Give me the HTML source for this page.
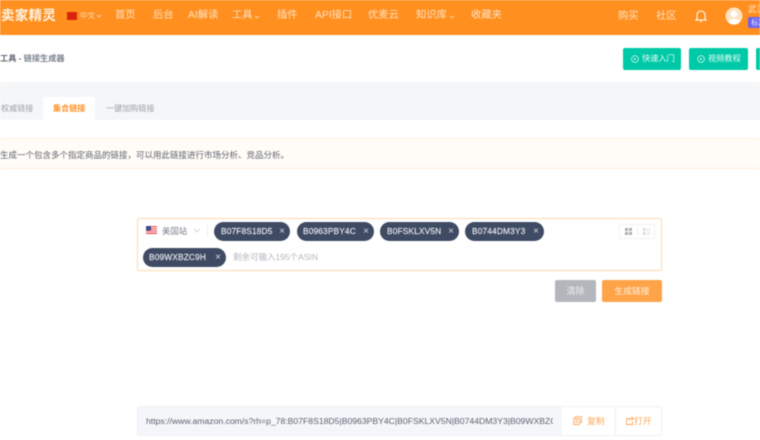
<!DOCTYPE html>
<html lang="zh">
<head>
<meta charset="utf-8">
<style>
html,body{margin:0;padding:0;background:#fff}
body{width:760px;height:440px;overflow:hidden;position:relative;font-family:"Liberation Sans","Noto Sans CJK SC",sans-serif;color:#606266}
.a{position:absolute;white-space:nowrap}
#wrap{position:absolute;left:0;top:0;width:760px;height:440px;overflow:hidden;filter:blur(.45px)}
.nav{top:0;height:35px;line-height:31px;font-size:10.3px;color:#ffe3c4}
.top{top:48px;height:22px;background:#00c9a7;border-radius:2px;color:#e6fbf6;font-size:8.2px;line-height:22px}
.tag{height:19px;border-radius:10px;background:#3f4a63;color:#e8ebf0;font-size:8.4px;line-height:19px;letter-spacing:.12px;-webkit-text-stroke:.15px #e8ebf0}
.tag i{position:absolute;right:5px;top:0;font-style:normal;font-size:10px;color:#d5d9e0;-webkit-text-stroke:0;letter-spacing:0}
.tag span{position:absolute;left:7px;top:0}
</style>
</head>
<body>
<div id="wrap">
<div class="a" style="left:0;top:0;width:760px;height:35px;background:#ff8f1f"></div>
<div class="a" style="left:1px;top:6px;font-size:13.5px;line-height:20px;font-weight:bold;color:#fff3e4;letter-spacing:.3px">卖家精灵</div>
<div class="a" style="left:67px;top:12px;width:10px;height:8px;background:#d9230f"></div>
<div class="a" style="left:80px;top:10px;font-size:7.5px;line-height:12px;color:#ffdcb5">中文</div>
<svg class="a" style="left:96px;top:14px" width="6" height="4"><path d="M1 1l2 2 2-2" fill="none" stroke="#ffe3c4" stroke-width=".8"/></svg>
<div class="a nav" style="left:115px">首页</div>
<div class="a nav" style="left:153px">后台</div>
<div class="a nav" style="left:188px">AI解读</div>
<div class="a nav" style="left:232px">工具</div>
<svg class="a" style="left:254px;top:15px" width="6" height="4"><path d="M1 1l2 2 2-2" fill="none" stroke="#ffe3c4" stroke-width=".8"/></svg>
<div class="a nav" style="left:277px">插件</div>
<div class="a nav" style="left:315px">API接口</div>
<div class="a nav" style="left:368px">优麦云</div>
<div class="a nav" style="left:416px">知识库</div>
<svg class="a" style="left:449px;top:15px" width="6" height="4"><path d="M1 1l2 2 2-2" fill="none" stroke="#ffe3c4" stroke-width=".8"/></svg>
<div class="a nav" style="left:471px">收藏夹</div>
<div class="a nav" style="left:618px;line-height:33px">购买</div>
<div class="a nav" style="left:656px;line-height:33px">社区</div>
<svg class="a" style="left:695px;top:9px" width="12" height="14" viewBox="0 0 12 14"><path d="M2 10V6a4 4 0 0 1 8 0v4l1 1H1zM5 12.500h2" fill="none" stroke="#fff" stroke-width="1.100"/></svg>
<svg class="a" style="left:725px;top:7px" width="18" height="18" viewBox="0 0 18 18"><circle cx="9" cy="9" r="8.500" fill="#ffe2c2"/><circle cx="9" cy="7" r="3.400" fill="#fff"/><path d="M3 15c1-4 11-4 12 0a8 8 0 0 1-12 0z" fill="#fff"/></svg>
<div class="a" style="left:748px;top:3px;font-size:8.500px;line-height:12px;color:#ffe3c4">武汉</div>
<div class="a" style="left:748px;top:17px;width:20px;height:11px;background:#6c63f0;border-radius:2px;color:#e6e4ff;font-size:7.500px;line-height:11px;padding-left:3px;box-sizing:border-box">标准</div>

<div class="a" style="left:0;top:52px;font-size:8.200px;line-height:14px;color:#5f6672;font-weight:bold">工具 - <span style="color:#7b8390">链接生成器</span></div>

<div class="a top" style="left:623px;width:58px"><svg class="a" style="left:8px;top:7px" width="8" height="8" viewBox="0 0 8 8"><circle cx="4" cy="4" r="3.400" fill="none" stroke="#d5f7ef" stroke-width=".8"/><path d="M3.200 2.500v3l2-1.500z" fill="#d5f7ef"/></svg><span class="a" style="left:19px">快速入门</span></div>
<div class="a top" style="left:689px;width:59px"><svg class="a" style="left:8px;top:7px" width="8" height="8" viewBox="0 0 8 8"><circle cx="4" cy="4" r="3.400" fill="none" stroke="#d5f7ef" stroke-width=".8"/><path d="M3.200 2.500v3l2-1.500z" fill="#d5f7ef"/></svg><span class="a" style="left:19px">视频教程</span></div>
<div class="a top" style="left:756px;width:10px"></div>

<div class="a" style="left:0;top:82px;width:760px;height:38px;background:#f5f6f8"></div>
<div class="a" style="left:43px;top:97px;width:52px;height:23px;background:#fff;border-radius:2px 2px 0 0"></div>
<div class="a" style="left:1px;top:102px;font-size:8.100px;line-height:14px;color:#9a9fa8">权威链接</div>
<div class="a" style="left:53px;top:102px;font-size:8.100px;line-height:14px;color:#ff8f1f;font-weight:bold">集合链接</div>
<div class="a" style="left:106px;top:102px;font-size:8.100px;line-height:14px;color:#9a9fa8">一键加购链接</div>

<div class="a" style="left:0;top:138px;width:760px;height:31px;box-sizing:border-box;background:#fffbf6;border-top:1px solid #ffeedd;border-bottom:1px solid #ffeedd"></div>
<div class="a" style="left:0;top:148px;font-size:8.500px;line-height:14px;color:#5f6470">生成一个包含多个指定商品的链接，可以用此链接进行市场分析、竞品分析。</div>

<div class="a" style="left:137px;top:218px;width:525px;height:53px;box-sizing:border-box;border:1.500px solid #ffd9ae;border-radius:2px;background:#fff"></div>
<svg class="a" style="left:146px;top:226px" width="11" height="8" viewBox="0 0 11 8"><rect width="11" height="8" fill="#e9505f"/><rect y="1.200" width="11" height="1" fill="#fff"/><rect y="3.400" width="11" height="1" fill="#fff"/><rect y="5.600" width="11" height="1" fill="#fff"/><rect width="5" height="4.400" fill="#3c4a86"/></svg>
<div class="a" style="left:162px;top:224px;font-size:8.400px;line-height:14px;color:#777d88">美国站</div>
<svg class="a" style="left:193px;top:228px" width="8" height="5"><path d="M1 1l3 3 3-3" fill="none" stroke="#c8ccd3" stroke-width=".8"/></svg>
<div class="a" style="left:207px;top:225px;width:1px;height:12px;background:#eceef1"></div>

<div class="a tag" style="left:214px;top:222px;width:76px"><span>B07F8S18D5</span><i>×</i></div>
<div class="a tag" style="left:297px;top:222px;width:77px"><span style="left:6px">B0963PBY4C</span><i>×</i></div>
<div class="a tag" style="left:380px;top:222px;width:79px"><span>B0FSKLXV5N</span><i>×</i></div>
<div class="a tag" style="left:465px;top:222px;width:79px"><span>B0744DM3Y3</span><i>×</i></div>
<div class="a tag" style="left:143px;top:248px;width:83px"><span style="left:6px">B09WXBZC9H</span><i>×</i></div>
<div class="a" style="left:233px;top:250px;font-size:8.500px;line-height:14px;color:#b3b7be">剩余可输入195个ASIN</div>

<div class="a" style="left:619px;top:224px;width:36px;height:15px;box-sizing:border-box;border:1px solid #f1f2f4;border-radius:2px"></div>
<svg class="a" style="left:625px;top:228px" width="7" height="7"><path d="M0 0h3v3H0zM4 0h3v3H4zM0 4h3v3H0zM4 4h3v3H4z" fill="#a9adb4"/></svg>
<div class="a" style="left:637px;top:227px;width:1px;height:9px;background:#f0f1f3"></div>
<svg class="a" style="left:643px;top:228px" width="8" height="7"><path d="M0 0h2.500v3H0zM0 4h2.500v3H0z" fill="#d8dade"/><path d="M3.500 1h4M3.500 2.500h4M3.500 5h4M3.500 6.500h3" stroke="#dfe1e4" stroke-width=".7"/></svg>

<div class="a" style="left:555px;top:280px;width:41px;height:22px;background:#b3b6bc;border-radius:2px;color:#eceef0;font-size:9px;line-height:22px;text-align:center">清除</div>
<div class="a" style="left:602px;top:280px;width:60px;height:22px;background:#ffa348;border-radius:2px;color:#fff0de;font-size:8.800px;line-height:22px;text-align:center">生成链接</div>

<div class="a" style="left:137px;top:406px;width:525px;height:30px;box-sizing:border-box;border:1px solid #eff1f4;border-radius:2px;background:#f5f6fa"></div>
<div class="a" style="left:146px;top:414px;width:407px;overflow:hidden;font-size:8.630px;line-height:14px;color:#5c6270;">https://www.amazon.com/s?rh=p_78:B07F8S18D5|B0963PBY4C|B0FSKLXV5N|B0744DM3Y3|B09WXBZC9H</div>
<div class="a" style="left:562px;top:407px;width:99px;height:28px;background:#fff"></div>
<div class="a" style="left:615px;top:407px;width:1px;height:28px;background:#eceef1"></div>
<svg class="a" style="left:573px;top:416px" width="9" height="9" viewBox="0 0 9 9"><path d="M2.500 2V.6h6v6H7M.6 2.500h6v6h-6zM2 4.500h3M2 6.300h3" fill="none" stroke="#ffaa5e" stroke-width=".9"/></svg>
<div class="a" style="left:587px;top:414px;font-size:8.800px;line-height:14px;color:#ffa85a">复制</div>
<svg class="a" style="left:626px;top:416px" width="8" height="9" viewBox="0 0 8 9"><path d="M3.500 2.500H.6v6h6V5.500M3 5l1-2.500h3M5.500 1L7.400 2.500 5.500 4" fill="none" stroke="#ffa85a" stroke-width=".9"/></svg>
<div class="a" style="left:634px;top:414px;font-size:8.800px;line-height:14px;color:#ffa85a">打开</div>
</div>
</body>
</html>
